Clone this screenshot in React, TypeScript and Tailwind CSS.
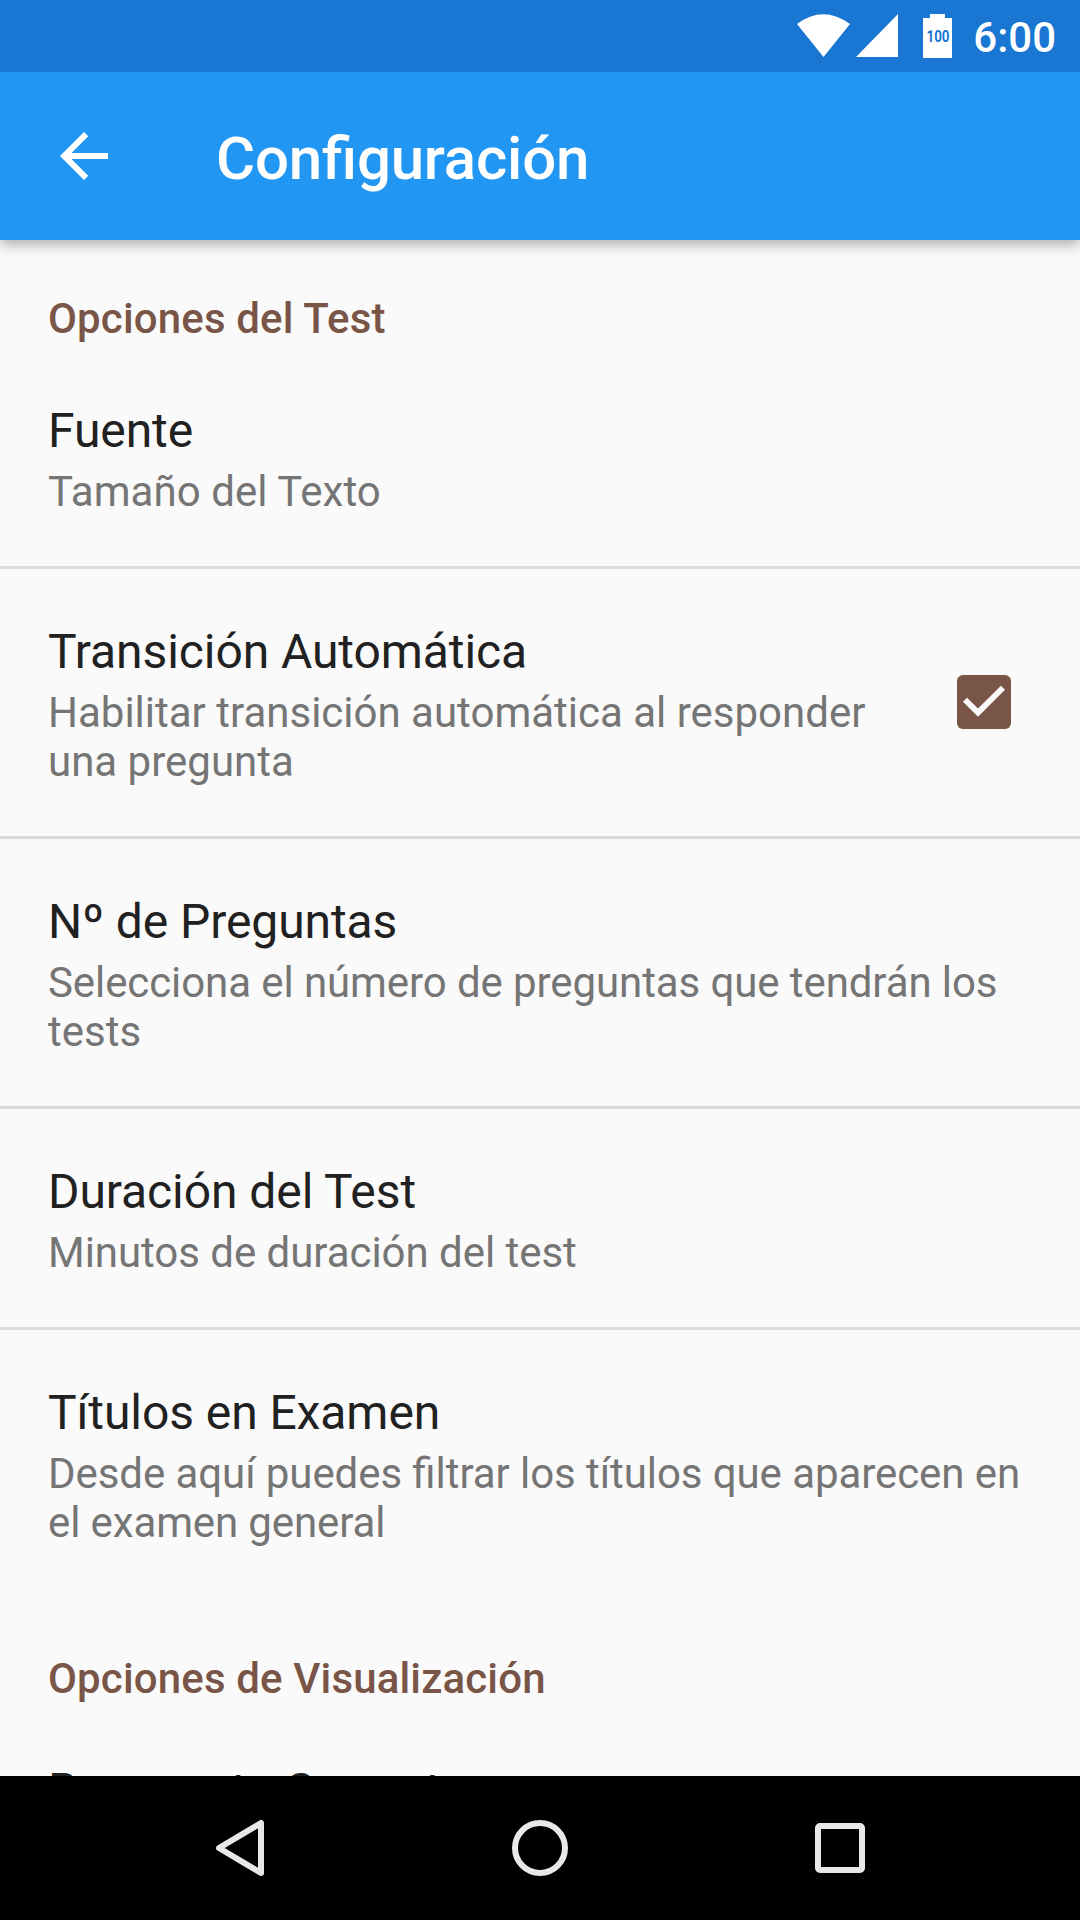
import React from 'react';

type Line = { text: string; tracking?: string };

function Row({ title, lines, checked }: { title: string; lines: Line[]; checked?: boolean }) {
  return (
    <div className="flex items-center justify-between px-12">
      <div className="pt-[52px] pb-[50px] whitespace-nowrap">
        <div className="text-[48px] leading-[61px] tracking-[-0.08px] text-[#212121]">{title}</div>
        <div className="pt-[6px] text-[42px] leading-[49px] text-[#757575]">
          {lines.map((l) => (
            <div key={l.text} className={l.tracking}>
              {l.text}
            </div>
          ))}
        </div>
      </div>
      {checked && (
        <svg className="mr-[21px] mb-px h-[54px] w-[54px] shrink-0" viewBox="0 0 54 54">
          <rect width="54" height="54" rx="6" fill="#795548" />
          <path d="M8 24.7L21 37.6L46 12.7" fill="none" stroke="#fafafa" strokeWidth="5.8" />
        </svg>
      )}
    </div>
  );
}

function Divider({ hidden }: { hidden?: boolean }) {
  return <div className={hidden ? 'h-[3px]' : 'h-[3px] bg-[#dadada]'} />;
}

function SectionTitle({ children }: { children: React.ReactNode }) {
  return (
    <h2 className="px-12 pt-[50px] text-[42px] leading-[58px] font-medium tracking-[0.15px] text-[#795548]">{children}</h2>
  );
}

export default function App() {
  return (
    <div className="flex h-[1920px] w-[1080px] flex-col overflow-hidden bg-[#fafafa] font-['Roboto',sans-serif] [font-feature-settings:'liga'_1]">
      <div className="relative z-20 flex h-[72px] shrink-0 items-center justify-end bg-[#1976d2] pr-6 text-white">
        <svg width="180" height="72" viewBox="0 0 180 72" fill="#fff">
          <path d="M17 24Q43 4.500 70 24L43.500 57Z" />
          <path d="M118 14V57H76Z" />
          <path d="M143 18H150V14H165V18H172V58H143Z" />
          <text x="146.500" y="42" fontSize="17" fontWeight="700" fill="#1976d2" textLength="23" lengthAdjust="spacingAndGlyphs">
            100
          </text>
        </svg>
        <span className="ml-3 w-[84px] pt-[2px] text-right text-[42px] font-medium">6:00</span>
      </div>
      <div className="relative z-10 flex h-[168px] shrink-0 items-center bg-[#2196f3] text-white shadow-[0_6px_12px_-1px_rgba(0,0,0,0.3)]">
        <svg className="ml-12 h-[72px] w-[72px]" viewBox="0 0 24 24" fill="currentColor">
          <path d="M20 11H7.83l5.59-5.59L12 4l-8 8 8 8 1.41-1.41L7.83 13H20v-2z" />
        </svg>
        <h1 className="ml-24 pt-[5px] text-[60px] font-medium tracking-[-0.2px]">Configuración</h1>
      </div>
      <main className="min-h-0 flex-1 overflow-hidden">
        <SectionTitle>Opciones del Test</SectionTitle>
        <Row title="Fuente" lines={[{ text: 'Tamaño del Texto', tracking: 'tracking-[0.05px]' }]} />
        <Divider />
        <Row
          title="Transición Automática"
          lines={[{ text: 'Habilitar transición automática al responder' }, { text: 'una pregunta' }]}
          checked
        />
        <Divider />
        <Row
          title="Nº de Preguntas"
          lines={[
            { text: 'Selecciona el número de preguntas que tendrán los', tracking: 'tracking-[-0.09px]' },
            { text: 'tests' },
          ]}
        />
        <Divider />
        <Row title="Duración del Test" lines={[{ text: 'Minutos de duración del test', tracking: 'tracking-[-0.04px]' }]} />
        <Divider />
        <Row
          title="Títulos en Examen"
          lines={[
            { text: 'Desde aquí puedes filtrar los títulos que aparecen en', tracking: 'tracking-[-0.07px]' },
            { text: 'el examen general', tracking: 'tracking-[-0.12px]' },
          ]}
        />
        <Divider hidden />
        <SectionTitle>Opciones de Visualización</SectionTitle>
        <Row title="Respuesta Correcta" lines={[]} />
      </main>
      <nav className="h-[144px] shrink-0 bg-black">
        <svg width="1080" height="144" fill="none" stroke="#e8e8e8" strokeWidth="6">
          <path d="M261 47V97L219 72Z" strokeLinejoin="round" />
          <circle cx="540" cy="72" r="25" />
          <rect x="818" y="50" width="44" height="44" rx="2" />
        </svg>
      </nav>
    </div>
  );
}
